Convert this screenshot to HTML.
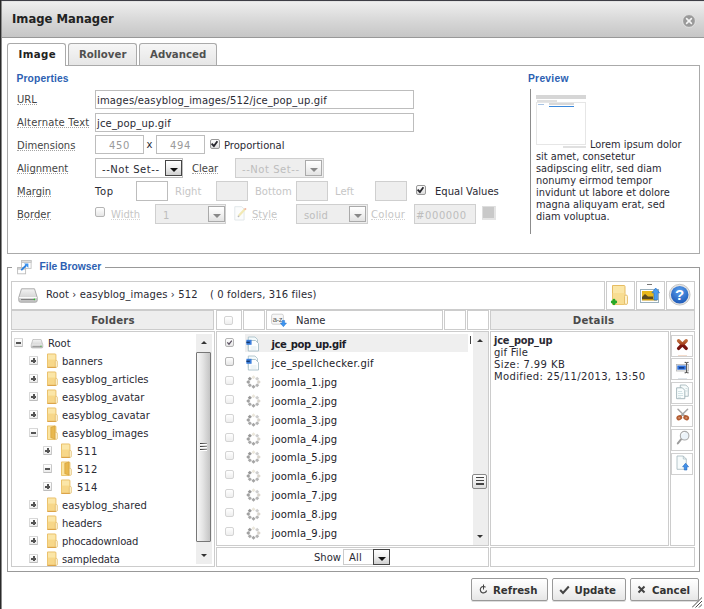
<!DOCTYPE html>
<html><head><meta charset="utf-8"><title>Image Manager</title>
<style>
*{box-sizing:border-box;margin:0;padding:0}
html,body{width:704px;height:609px;overflow:hidden;background:#fff}
body{font-family:"DejaVu Sans","Liberation Sans",sans-serif;font-size:10px;color:#333;position:relative}
.a{position:absolute}
.t{position:absolute;white-space:nowrap;line-height:12px;color:#2a2a33}
.lb{border-bottom:1px dotted #a4a4a4;height:11px;color:#444}
.t.dis{color:#c6c6c6}
.dis.lb{border-bottom-color:#d4d4d4}
.in{position:absolute;border:1px solid #bdbdbd;background:#fff;height:19px;line-height:19px;padding:0 1px;letter-spacing:.15px;overflow:hidden;white-space:nowrap;color:#2a2a33;font-size:10px}
.in.d{background:#eee;border-color:#cfcfcf;color:#bdbdbd}
.h{font-family:"Liberation Sans",sans-serif;font-weight:bold;font-size:10.3px;color:#2d5fb2}
.b{font-weight:bold}
.hdr{position:absolute;background:#eee;border:1px solid #ccc}
.pn{position:absolute;background:#fff;border:1px solid #ccc}
.cb{position:absolute;width:10px;height:10px;border:1px solid #999;border-radius:2px;background:linear-gradient(#fdfdfd,#dedede)}
.cb.s{width:9px;height:9px}
.cb.f{border-color:#d4d4d4;background:linear-gradient(#fff,#eee)}
.cb.m{border-color:#b4b4b4;background:linear-gradient(#fff,#e6e6e6)}
.btn{position:absolute;border:1px solid #999;border-radius:2px;background:linear-gradient(#fff,#f4f4f4 50%,#e6e6e6);height:23px;top:578px;box-shadow:0 1px 0 #ddd}
.ab{position:absolute;left:671px;width:22px;height:22px;border:1px solid #d0d0d0;background:#fff}
.sa{position:absolute;width:17px;height:16px;border:1px solid #444;background:linear-gradient(#fff,#f0f0f0 45%,#cfcfcf);}
.sa:after{content:"";position:absolute;left:3.5px;top:6.5px;border:4px solid transparent;border-top:4.5px solid #111;border-bottom:none}
.sa.d{border-color:#aaa;background:linear-gradient(#fff,#f4f4f4 45%,#e2e2e2)}
.sa.d:after{border-top-color:#888}
.pm{position:absolute;width:9px;height:9px;border:1px solid #d8d8d8;border-bottom-color:#bcbcbc;border-right-color:#c8c8c8;border-radius:1px;background:linear-gradient(#fff,#ececec)}
.pm:before{content:"";position:absolute;left:1px;top:2.500px;width:5px;height:2px;background:#555}
.pm.p:after{content:"";position:absolute;left:2.500px;top:1px;width:2px;height:5px;background:#555}
</style></head><body>
<div class="a" style="left:0;top:0;width:704px;height:1px;background:#3e3e46"></div>
<div class="a" style="left:0;top:0;width:1px;height:609px;background:#2a2a2a"></div>
<div class="a" style="left:1px;top:1px;width:1px;height:608px;background:#8a8a8a"></div>
<div class="a" style="left:2px;top:1px;width:702px;height:37px;background:linear-gradient(#dedede 0,#eeeeee 4%,#e3e3e3 28%,#d5d5d5 60%,#c6c6c6 100%);border-bottom:1px solid #989898"></div>
<div class="t b" style="left:12px;top:12px;font-size:11.6px;line-height:14px;color:#222">Image Manager</div>
<svg class="a" style="left:682px;top:14px" width="14" height="14" viewBox="0 0 14 14"><circle cx="7" cy="7" r="6.4" fill="#9a9a9a" stroke="#e8e8e8" stroke-width=".9"/><path d="M4.600 4.600L9.400 9.400M9.400 4.600L4.600 9.400" stroke="#f4f4f4" stroke-width="1.600" stroke-linecap="round"/></svg>
<div class="a" style="left:7px;top:65px;width:693px;height:189px;border:1px solid #aaa;background:#fff"></div>
<div class="a" style="left:68px;top:43px;width:69px;height:22px;border:1px solid #aaa;border-bottom:none;border-radius:3px 3px 0 0;background:linear-gradient(#f6f6f6,#e6e6e6)"></div>
<div class="a" style="left:139px;top:43px;width:78px;height:22px;border:1px solid #aaa;border-bottom:none;border-radius:3px 3px 0 0;background:linear-gradient(#f6f6f6,#e6e6e6)"></div>
<div class="a" style="left:7px;top:43px;width:59px;height:23px;border:1px solid #aaa;border-bottom:none;border-radius:3px 3px 0 0;background:#fff"></div>
<div class="t b" style="left:18.5px;top:49px;font-size:10.2px;letter-spacing:.4px;color:#222">Image</div>
<div class="t b" style="left:79px;top:49px;font-size:10.2px;color:#505050">Rollover</div>
<div class="t b" style="left:150px;top:49px;font-size:10.2px;color:#505050">Advanced</div>
<div class="t h" style="left:16.5px;top:73px;letter-spacing:.12px">Properties</div>
<div class="t lb " style="left:17px;top:94px">URL</div>
<div class="in" style="left:95px;top:90px;width:319px">images/easyblog_images/512/jce_pop_up.gif</div>
<div class="t lb " style="left:17px;top:117px;letter-spacing:0.2px">Alternate Text</div>
<div class="in" style="left:95px;top:113px;width:319px">jce_pop_up.gif</div>
<div class="t lb " style="left:17px;top:140px">Dimensions</div>
<div class="in" style="left:95px;top:135px;width:49px;text-align:center;letter-spacing:.7px;color:#9a9a9a">450</div>
<div class="t " style="left:146.5px;top:139px;font-size:10px">x</div>
<div class="in" style="left:156px;top:135px;width:49px;text-align:center;letter-spacing:.7px;color:#9a9a9a">494</div>
<div class="cb" style="left:210px;top:139px"></div>
<svg class="a" style="left:210.1px;top:138.7px" width="9" height="9" viewBox="0 0 9 9"><path d="M1.6 4.7L3.9 7L7.4 2.2" fill="none" stroke="#26262c" stroke-width="1.8"/></svg>
<div class="t " style="left:224px;top:140px;">Proportional</div>
<div class="t lb " style="left:17px;top:163px">Alignment</div>
<div class="in" style="left:95px;top:158px;width:88px;height:20px;padding-left:6px;line-height:21px;letter-spacing:.55px">--Not Set--</div>
<div class="sa" style="left:165px;top:160px"></div>
<div class="t lb " style="left:192px;top:163px">Clear</div>
<div class="in d" style="left:235px;top:158px;width:89px;height:20px;padding-left:6px;line-height:21px;letter-spacing:.55px">--Not Set--</div>
<div class="sa d" style="left:305px;top:160px"></div>
<div class="t lb " style="left:17px;top:186px">Margin</div>
<div class="t " style="left:95px;top:186px;letter-spacing:.6px">Top</div>
<div class="in" style="left:136px;top:181px;width:32px;height:20px"></div>
<div class="t dis" style="left:175px;top:186px;">Right</div>
<div class="in d" style="left:216px;top:181px;width:32px;height:20px"></div>
<div class="t dis" style="left:255px;top:186px;">Bottom</div>
<div class="in d" style="left:296px;top:181px;width:32px;height:20px"></div>
<div class="t dis" style="left:335px;top:186px;">Left</div>
<div class="in d" style="left:375px;top:181px;width:32px;height:20px"></div>
<div class="cb" style="left:416px;top:185px"></div>
<svg class="a" style="left:416.1px;top:184.7px" width="9" height="9" viewBox="0 0 9 9"><path d="M1.6 4.7L3.9 7L7.4 2.2" fill="none" stroke="#26262c" stroke-width="1.8"/></svg>
<div class="t " style="left:435px;top:186px;">Equal Values</div>
<div class="t lb " style="left:17px;top:209px">Border</div>
<div class="cb m" style="left:95px;top:207px"></div>
<div class="t lb dis" style="left:111px;top:209px">Width</div>
<div class="in d" style="left:155px;top:204px;width:71px;height:20px;padding-left:7px;line-height:21px">1</div>
<div class="sa d" style="left:208px;top:206px"></div>
<svg class="a" style="left:233px;top:205px" width="15" height="16" viewBox="0 0 15 16"><path d="M1.800 1.700h7l2.300 2.300v11h-9.300z" fill="#fbfcfc" stroke="#dfe5e8" stroke-width=".9"/><path d="M11.800 4.200L5.800 10.800" stroke="#f2e9b4" stroke-width="2.200"/><circle cx="12.300" cy="4" r="1.100" fill="#f1b8a4"/><circle cx="5.500" cy="11.300" r=".9" fill="#b8b8b8"/></svg>
<div class="t lb dis" style="left:252px;top:209px">Style</div>
<div class="in d" style="left:296px;top:204px;width:72px;height:20px;padding-left:7px;line-height:21px">solid</div>
<div class="sa d" style="left:349px;top:206px"></div>
<div class="t lb dis" style="left:371px;top:209px;letter-spacing:0.3px">Colour</div>
<div class="in d" style="left:414px;top:204px;width:62px;height:20px;padding-left:1px;line-height:21px;letter-spacing:.6px">#000000</div>
<div class="a" style="left:482px;top:206px;width:14px;height:14px;background:#c9c9c9;border:1px solid #dedede;border-right:2px solid #e4e4e4;border-bottom:2px solid #e4e4e4"></div>
<div class="t h" style="left:528px;top:73px;letter-spacing:.25px">Preview</div>
<div class="a" style="left:530px;top:89px;width:1px;height:145px;background:#8c8c8c"></div>
<div class="a" style="left:536px;top:95px;width:50px;height:54px;background:#fff">
<div class="a" style="left:0;top:0;width:50px;height:3.500px;background:#d6d6d6"></div>
<div class="a" style="left:1px;top:4.500px;width:20px;height:2px;background:#e0e0e0"></div>
<div class="a" style="left:0;top:6.500px;width:50px;height:43.500px;border:1px solid #e6e6e6"></div>
<div class="a" style="left:1.500px;top:8.500px;width:6px;height:1px;background:#a8c4e4"></div>
<div class="a" style="left:12.500px;top:7.800px;width:25px;height:2.400px;border:1px solid #d8d8d8;border-width:.6px"></div>
<div class="a" style="left:12.500px;top:11px;width:25px;height:1.400px;background:#3a88dc"></div>
<div class="a" style="left:26.500px;top:51px;width:23px;height:2.200px;background:#e0e0e0"></div>
</div>
<div class="a" style="left:536px;top:139px;width:160px;line-height:12px;font-size:9.8px;color:#2a2a33;text-indent:54px">Lorem ipsum dolor<br>sit amet, consetetur<br>sadipscing elitr, sed diam<br>nonumy eirmod tempor<br>invidunt ut labore et dolore<br>magna aliquyam erat, sed<br>diam voluptua.</div>
<div class="a" style="left:7px;top:267px;width:693px;height:305px;border:1px solid #999"></div>
<div class="a" style="left:12px;top:258px;width:93px;height:18px;background:#fff"></div>
<svg class="a" style="left:17px;top:260px" width="15" height="15" viewBox="0 0 15 15">
<rect x="4.500" y=".6" width="9.600" height="7.800" fill="#fff" stroke="#c2c2c2" stroke-width=".9"/><rect x="4.500" y=".6" width="9.600" height="1.800" fill="#e2e2e2" stroke="#c2c2c2" stroke-width=".9"/>
<rect x=".6" y="7.600" width="8" height="6.200" fill="#fff" stroke="#bcbcbc" stroke-width=".9"/><rect x=".6" y="7.600" width="8" height="1.500" fill="#e2e2e2" stroke="#bcbcbc" stroke-width=".9"/>
<path d="M4.800 9.600L8.600 5.800" stroke="#2a80e0" stroke-width="1.900" stroke-linecap="round"/><path d="M7 3.600h4.400v4.400z" fill="#3a92f0"/></svg>
<div class="t h" style="left:39.5px;top:261px">File Browser</div>
<div class="pn" style="left:11px;top:281px;width:594px;height:29px"></div>
<svg class="a" style="left:18px;top:288px" width="20" height="15" viewBox="0 0 20 15"><defs><linearGradient id="dg1" x1="0" y1="0" x2="0" y2="1"><stop offset="0" stop-color="#f4f4f4"/><stop offset="1" stop-color="#c4c4c4"/></linearGradient></defs>
<path d="M3.5 .8h13l2.7 8.5v3.2q0 1.7-1.7 1.7H2.500q-1.700 0-1.700-1.700V9.300z" fill="url(#dg1)" stroke="#a4a4a4" stroke-width=".9"/>
<path d="M1.2 9.600h17.600" stroke="#fff" stroke-width="1"/><path d="M3 11.600h14" stroke="#777" stroke-width="1"/><circle cx="16.400" cy="11.300" r=".9" fill="#2cc02c"/></svg>
<div class="t " style="left:46px;top:289px;letter-spacing:.1px">Root › easyblog_images › 512</div>
<div class="t " style="left:210px;top:289px;letter-spacing:.12px">( 0 folders, 316 files)</div>
<div class="pn" style="left:606px;top:281px;width:29px;height:29px"></div>
<div class="pn" style="left:636px;top:281px;width:29px;height:29px"></div>
<div class="pn" style="left:666px;top:281px;width:29px;height:29px"></div>
<svg class="a" style="left:609px;top:284px" width="20" height="22" viewBox="0 0 20 22">
<path d="M3.500 1.500h11.500q1 0 1 1v17q0 1-1 1h-11.500z" fill="#fbe6a6" stroke="#e6bc62"/>
<path d="M3.500 9h12.500v11.500h-12.500z" fill="#f7d98a" opacity=".7"/>
<rect x="15.500" y="11" width="3" height="9.500" rx="1.500" fill="#fff3cf" stroke="#e0b55a" stroke-width=".8"/>
<path d="M5 16.200v3.600M3.200 18h3.600" stroke="#27a827" stroke-width="2.800" stroke-linecap="round"/></svg>
<svg class="a" style="left:639px;top:283px" width="22" height="22" viewBox="0 0 22 22">
<rect x="8" y="1" width="5" height="1" fill="#777"/>
<rect x="1.500" y="6.500" width="18" height="13" fill="#fff" stroke="#9ab0bd"/>
<rect x="3" y="8" width="15" height="9" fill="#e8b71c"/>
<path d="M3 14l3-3 3 2.500h5v2.500h-11z" fill="#5a4a20"/>
<rect x="3" y="16" width="15" height="1.500" fill="#c8960c"/>
<path d="M16.700 5l3.800 4.800h-2.100v7.200h-3.400v-7.200h-2.100z" fill="#4a9cf0" stroke="#2a72c8" stroke-width=".7"/></svg>
<svg class="a" style="left:668px;top:283px" width="24" height="24" viewBox="0 0 24 24"><defs><radialGradient id="hg" cx=".5" cy=".3" r=".8"><stop offset="0" stop-color="#5aa0ee"/><stop offset="1" stop-color="#1650b0"/></radialGradient></defs>
<circle cx="11.700" cy="11.700" r="10.400" fill="#e4e4e4" stroke="#bbb" stroke-width=".8"/><circle cx="11.700" cy="11.700" r="8.800" fill="url(#hg)"/>
<text x="11.700" y="17" text-anchor="middle" font-family="Liberation Sans,sans-serif" font-weight="bold" font-size="15" fill="#fff">?</text></svg>
<div class="hdr" style="left:11px;top:310px;width:203px;height:20px"></div>
<div class="t b" style="left:11.5px;top:315px;width:203px;text-align:center;color:#4a4a4a;font-size:10.2px;letter-spacing:.2px">Folders</div>
<div class="pn" style="left:216px;top:310px;width:26px;height:20px"></div>
<div class="pn" style="left:243px;top:310px;width:22px;height:20px"></div>
<div class="pn" style="left:266px;top:310px;width:177px;height:20px"></div>
<div class="pn" style="left:444px;top:310px;width:22px;height:20px"></div>
<div class="pn" style="left:467px;top:310px;width:22px;height:20px"></div>
<svg class="a" style="left:271px;top:313px" width="16" height="15" viewBox="0 0 16 15"><rect x=".6" y="1.200" width="11.800" height="10" rx="1.500" fill="#f7f7f7" stroke="#cdcdcd" stroke-width=".9"/><text x="6.500" y="8.800" text-anchor="middle" font-family="Liberation Sans,sans-serif" font-size="7.500" fill="#5a5a5a" letter-spacing="-.3">a-z</text><path d="M11.200 7.500v2.600h-1.900l3.100 3.600 3.100-3.600h-1.900V7.500z" fill="#3d95f0" stroke="#2273cf" stroke-width=".5"/></svg>
<div class="t " style="left:296px;top:315px;">Name</div>
<div class="cb s f" style="left:224px;top:316px"></div>
<div class="hdr" style="left:490px;top:310px;width:205px;height:20px"></div>
<div class="t b" style="left:491px;top:315px;width:205px;text-align:center;color:#4a4a4a;font-size:10.2px;letter-spacing:.2px">Details</div>
<div class="pn" style="left:11px;top:331px;width:204px;height:236px"></div>
<div class="pn" style="left:216px;top:331px;width:273px;height:215px"></div>
<div class="pn" style="left:490px;top:331px;width:179px;height:215px"></div>
<div class="pn" style="left:670px;top:331px;width:25px;height:215px"></div>
<div class="pn" style="left:216px;top:547px;width:273px;height:20px"></div>
<div class="pn" style="left:490px;top:547px;width:205px;height:20px"></div>
<div class="a" style="left:12px;top:332px;width:184px;height:234px;overflow:hidden">
<div class="pm" style="left:2px;top:6px"></div>
<svg class="a" style="left:18px;top:7px" width="14" height="9.5" viewBox="0 0 20 15"><defs><linearGradient id="dg2" x1="0" y1="0" x2="0" y2="1"><stop offset="0" stop-color="#f4f4f4"/><stop offset="1" stop-color="#c4c4c4"/></linearGradient></defs>
<path d="M3.5 .8h13l2.7 8.5v3.2q0 1.7-1.7 1.7H2.500q-1.700 0-1.700-1.700V9.300z" fill="url(#dg2)" stroke="#a4a4a4" stroke-width=".9"/>
<path d="M1.2 9.600h17.600" stroke="#fff" stroke-width="1"/><path d="M3 11.600h14" stroke="#777" stroke-width="1"/><circle cx="16.400" cy="11.300" r=".9" fill="#2cc02c"/></svg>
<div class="t" style="left:36px;top:6px">Root</div>
<div class="pm p" style="left:17px;top:24px"></div>
<svg class="a" style="left:33.5px;top:21px" width="12.400" height="15" viewBox="0 0 13 16"><path d="M1.500 1h8q1 0 1 1v12.500q0 1-1 1h-8z" fill="#fbe6a8" stroke="#e6b85a" stroke-width=".9"/><path d="M1.500 7h9v8h-9z" fill="#f4cf78" opacity=".65"/><path d="M1.500 15.300h9" stroke="#d89c40" stroke-width="1"/><rect x="9.800" y="8" width="2.200" height="7.300" rx="1.100" fill="#fff4d4" stroke="#dcb25a" stroke-width=".7"/></svg>
<div class="t" style="left:50px;top:24px">banners</div>
<div class="pm p" style="left:17px;top:42px"></div>
<svg class="a" style="left:33.5px;top:39px" width="12.400" height="15" viewBox="0 0 13 16"><path d="M1.500 1h8q1 0 1 1v12.500q0 1-1 1h-8z" fill="#fbe6a8" stroke="#e6b85a" stroke-width=".9"/><path d="M1.500 7h9v8h-9z" fill="#f4cf78" opacity=".65"/><path d="M1.500 15.300h9" stroke="#d89c40" stroke-width="1"/><rect x="9.800" y="8" width="2.200" height="7.300" rx="1.100" fill="#fff4d4" stroke="#dcb25a" stroke-width=".7"/></svg>
<div class="t" style="left:50px;top:42px">easyblog_articles</div>
<div class="pm p" style="left:17px;top:60px"></div>
<svg class="a" style="left:33.5px;top:57px" width="12.400" height="15" viewBox="0 0 13 16"><path d="M1.500 1h8q1 0 1 1v12.500q0 1-1 1h-8z" fill="#fbe6a8" stroke="#e6b85a" stroke-width=".9"/><path d="M1.500 7h9v8h-9z" fill="#f4cf78" opacity=".65"/><path d="M1.500 15.300h9" stroke="#d89c40" stroke-width="1"/><rect x="9.800" y="8" width="2.200" height="7.300" rx="1.100" fill="#fff4d4" stroke="#dcb25a" stroke-width=".7"/></svg>
<div class="t" style="left:50px;top:60px">easyblog_avatar</div>
<div class="pm p" style="left:17px;top:78px"></div>
<svg class="a" style="left:33.5px;top:75px" width="12.400" height="15" viewBox="0 0 13 16"><path d="M1.500 1h8q1 0 1 1v12.500q0 1-1 1h-8z" fill="#fbe6a8" stroke="#e6b85a" stroke-width=".9"/><path d="M1.500 7h9v8h-9z" fill="#f4cf78" opacity=".65"/><path d="M1.500 15.300h9" stroke="#d89c40" stroke-width="1"/><rect x="9.800" y="8" width="2.200" height="7.300" rx="1.100" fill="#fff4d4" stroke="#dcb25a" stroke-width=".7"/></svg>
<div class="t" style="left:50px;top:78px">easyblog_cavatar</div>
<div class="pm" style="left:17px;top:96px"></div>
<svg class="a" style="left:33.5px;top:93px" width="12.400" height="15" viewBox="0 0 13 16"><path d="M1.500 1h8q1 0 1 1v12.500q0 1-1 1h-8z" fill="#fbe4a0" stroke="#e8bc5c" stroke-width=".9"/><path d="M5 2.500l4.500-1.500v14l-4.500 -1.500z" fill="#e8b84e" stroke="#cf9a36" stroke-width=".6"/><rect x="9.800" y="8" width="2.200" height="7.300" rx="1.100" fill="#fff4d4" stroke="#dcb25a" stroke-width=".7"/></svg>
<div class="t" style="left:50px;top:96px">easyblog_images</div>
<div class="pm p" style="left:31px;top:114px"></div>
<svg class="a" style="left:47.5px;top:111px" width="12.400" height="15" viewBox="0 0 13 16"><path d="M1.500 1h8q1 0 1 1v12.500q0 1-1 1h-8z" fill="#fbe6a8" stroke="#e6b85a" stroke-width=".9"/><path d="M1.500 7h9v8h-9z" fill="#f4cf78" opacity=".65"/><path d="M1.500 15.300h9" stroke="#d89c40" stroke-width="1"/><rect x="9.800" y="8" width="2.200" height="7.300" rx="1.100" fill="#fff4d4" stroke="#dcb25a" stroke-width=".7"/></svg>
<div class="t" style="left:65px;top:114px;letter-spacing:.7px">511</div>
<div class="pm" style="left:31px;top:132px"></div>
<svg class="a" style="left:47.5px;top:129px" width="12.400" height="15" viewBox="0 0 13 16"><path d="M1.500 1h8q1 0 1 1v12.500q0 1-1 1h-8z" fill="#fbe4a0" stroke="#e8bc5c" stroke-width=".9"/><path d="M5 2.500l4.500-1.500v14l-4.500 -1.500z" fill="#e8b84e" stroke="#cf9a36" stroke-width=".6"/><rect x="9.800" y="8" width="2.200" height="7.300" rx="1.100" fill="#fff4d4" stroke="#dcb25a" stroke-width=".7"/></svg>
<div class="t" style="left:65px;top:132px;letter-spacing:.7px">512</div>
<div class="pm p" style="left:31px;top:150px"></div>
<svg class="a" style="left:47.5px;top:147px" width="12.400" height="15" viewBox="0 0 13 16"><path d="M1.500 1h8q1 0 1 1v12.500q0 1-1 1h-8z" fill="#fbe6a8" stroke="#e6b85a" stroke-width=".9"/><path d="M1.500 7h9v8h-9z" fill="#f4cf78" opacity=".65"/><path d="M1.500 15.300h9" stroke="#d89c40" stroke-width="1"/><rect x="9.800" y="8" width="2.200" height="7.300" rx="1.100" fill="#fff4d4" stroke="#dcb25a" stroke-width=".7"/></svg>
<div class="t" style="left:65px;top:150px;letter-spacing:.7px">514</div>
<div class="pm p" style="left:17px;top:168px"></div>
<svg class="a" style="left:33.5px;top:165px" width="12.400" height="15" viewBox="0 0 13 16"><path d="M1.500 1h8q1 0 1 1v12.500q0 1-1 1h-8z" fill="#fbe6a8" stroke="#e6b85a" stroke-width=".9"/><path d="M1.500 7h9v8h-9z" fill="#f4cf78" opacity=".65"/><path d="M1.500 15.300h9" stroke="#d89c40" stroke-width="1"/><rect x="9.800" y="8" width="2.200" height="7.300" rx="1.100" fill="#fff4d4" stroke="#dcb25a" stroke-width=".7"/></svg>
<div class="t" style="left:50px;top:168px;letter-spacing:.05px">easyblog_shared</div>
<div class="pm p" style="left:17px;top:186px"></div>
<svg class="a" style="left:33.5px;top:183px" width="12.400" height="15" viewBox="0 0 13 16"><path d="M1.500 1h8q1 0 1 1v12.500q0 1-1 1h-8z" fill="#fbe6a8" stroke="#e6b85a" stroke-width=".9"/><path d="M1.500 7h9v8h-9z" fill="#f4cf78" opacity=".65"/><path d="M1.500 15.300h9" stroke="#d89c40" stroke-width="1"/><rect x="9.800" y="8" width="2.200" height="7.300" rx="1.100" fill="#fff4d4" stroke="#dcb25a" stroke-width=".7"/></svg>
<div class="t" style="left:50px;top:186px;letter-spacing:-.1px">headers</div>
<div class="pm p" style="left:17px;top:204px"></div>
<svg class="a" style="left:33.5px;top:201px" width="12.400" height="15" viewBox="0 0 13 16"><path d="M1.500 1h8q1 0 1 1v12.500q0 1-1 1h-8z" fill="#fbe6a8" stroke="#e6b85a" stroke-width=".9"/><path d="M1.500 7h9v8h-9z" fill="#f4cf78" opacity=".65"/><path d="M1.500 15.300h9" stroke="#d89c40" stroke-width="1"/><rect x="9.800" y="8" width="2.200" height="7.300" rx="1.100" fill="#fff4d4" stroke="#dcb25a" stroke-width=".7"/></svg>
<div class="t" style="left:50px;top:204px;letter-spacing:-.2px">phocadownload</div>
<div class="pm p" style="left:17px;top:222px"></div>
<svg class="a" style="left:33.5px;top:219px" width="12.400" height="15" viewBox="0 0 13 16"><path d="M1.500 1h8q1 0 1 1v12.500q0 1-1 1h-8z" fill="#fbe6a8" stroke="#e6b85a" stroke-width=".9"/><path d="M1.500 7h9v8h-9z" fill="#f4cf78" opacity=".65"/><path d="M1.500 15.300h9" stroke="#d89c40" stroke-width="1"/><rect x="9.800" y="8" width="2.200" height="7.300" rx="1.100" fill="#fff4d4" stroke="#dcb25a" stroke-width=".7"/></svg>
<div class="t" style="left:50px;top:222px;letter-spacing:-.12px">sampledata</div>
</div>
<div class="a" style="left:196px;top:334px;width:15.500px;height:230px;background:#eee"></div>
<div class="a" style="left:196px;top:352px;width:15px;height:190px;border:1px solid #777;border-radius:1px;background:linear-gradient(90deg,#f8f8f8,#e4e4e4 45%,#c4c4c4)"></div>
<div class="a" style="left:200.500px;top:340.500px;border:3.500px solid transparent;border-bottom:3.500px solid #333;border-top:none"></div>
<div class="a" style="left:200.500px;top:554px;border:3.500px solid transparent;border-top:3.500px solid #333;border-bottom:none"></div>
<div class="a" style="left:200px;top:443px;width:7px;height:1.300px;background:linear-gradient(90deg,#333,#999);box-shadow:0 1px 0 #fff"></div><div class="a" style="left:200px;top:446px;width:7px;height:1.300px;background:linear-gradient(90deg,#333,#999);box-shadow:0 1px 0 #fff"></div><div class="a" style="left:200px;top:449px;width:7px;height:1.300px;background:linear-gradient(90deg,#333,#999);box-shadow:0 1px 0 #fff"></div>
<div class="a" style="left:245px;top:334px;width:223px;height:17.500px;background:#efefef"></div>
<div class="cb s m" style="left:225px;top:338px"></div>
<svg class="a" style="left:225px;top:338px" width="9" height="9" viewBox="0 0 9 9"><path d="M2.300 4.300L4 6.200L6.800 2.600" fill="none" stroke="#5a5060" stroke-width="1.200"/></svg>
<svg class="a" style="left:245px;top:335.5px" width="16" height="16" viewBox="0 0 16 16"><path d="M3.300 1h6.700l2.500 2.500v9h-9.200z" fill="#f4fafb" stroke="#a4bcc6" stroke-width=".8"/><path d="M3.300 4.500h7.200l3 3v7.500h-10.200z" fill="#fcfefe" stroke="#9cb6c0" stroke-width=".8"/><rect x="1.400" y="3.800" width="5.200" height="5" fill="#3a7edc"/><rect x="1.400" y="5.600" width="3.400" height="1.500" fill="#173a70"/><path d="M5.500 11h6M5.500 13h6" stroke="#dbe8ec" stroke-width=".8"/></svg>
<div class="t b" style="left:271.500px;top:339px;color:#1c1c28;letter-spacing:-.45px">jce_pop_up.gif</div>
<div class="cb s m" style="left:225px;top:357px"></div>
<svg class="a" style="left:245px;top:354.5px" width="16" height="16" viewBox="0 0 16 16"><path d="M3.300 1h6.700l2.500 2.500v9h-9.200z" fill="#f4fafb" stroke="#a4bcc6" stroke-width=".8"/><path d="M3.300 4.500h7.200l3 3v7.500h-10.200z" fill="#fcfefe" stroke="#9cb6c0" stroke-width=".8"/><rect x="1.400" y="3.800" width="5.200" height="5" fill="#3a7edc"/><rect x="1.400" y="5.600" width="3.400" height="1.500" fill="#173a70"/><path d="M5.500 11h6M5.500 13h6" stroke="#dbe8ec" stroke-width=".8"/></svg>
<div class="t" style="left:271.500px;top:358px;color:#1c1c28;letter-spacing:.28px">jce_spellchecker.gif</div>
<div class="cb s f" style="left:225px;top:376px"></div>
<svg class="a" style="left:246px;top:374.5px" width="15" height="14" viewBox="0 0 15 14"><rect x="6.05" y="0.85" width="2.9" height="2.9" fill="#ebe7dc" transform="rotate(45 7.50 2.30)"/><rect x="9.73" y="2.23" width="2.9" height="2.9" fill="#cdcdcd" transform="rotate(45 11.18 3.68)"/><rect x="11.25" y="5.55" width="2.9" height="2.9" fill="#d8d4cc" transform="rotate(45 12.70 7.00)"/><rect x="9.73" y="8.87" width="2.9" height="2.9" fill="#b4b4b4" transform="rotate(45 11.18 10.32)"/><rect x="6.05" y="10.25" width="2.9" height="2.9" fill="#a4a4a4" transform="rotate(45 7.50 11.70)"/><rect x="2.37" y="8.87" width="2.9" height="2.9" fill="#a8a8a8" transform="rotate(45 3.82 10.32)"/><rect x="0.85" y="5.55" width="2.9" height="2.9" fill="#a0a0a0" transform="rotate(45 2.30 7.00)"/><rect x="2.37" y="2.23" width="2.9" height="2.9" fill="#969696" transform="rotate(45 3.82 3.68)"/></svg>
<div class="t" style="left:271.500px;top:377px;color:#1c1c28;letter-spacing:.17px">joomla_1.jpg</div>
<div class="cb s f" style="left:225px;top:395px"></div>
<svg class="a" style="left:246px;top:393.5px" width="15" height="14" viewBox="0 0 15 14"><rect x="6.05" y="0.85" width="2.9" height="2.9" fill="#ebe7dc" transform="rotate(45 7.50 2.30)"/><rect x="9.73" y="2.23" width="2.9" height="2.9" fill="#cdcdcd" transform="rotate(45 11.18 3.68)"/><rect x="11.25" y="5.55" width="2.9" height="2.9" fill="#d8d4cc" transform="rotate(45 12.70 7.00)"/><rect x="9.73" y="8.87" width="2.9" height="2.9" fill="#b4b4b4" transform="rotate(45 11.18 10.32)"/><rect x="6.05" y="10.25" width="2.9" height="2.9" fill="#a4a4a4" transform="rotate(45 7.50 11.70)"/><rect x="2.37" y="8.87" width="2.9" height="2.9" fill="#a8a8a8" transform="rotate(45 3.82 10.32)"/><rect x="0.85" y="5.55" width="2.9" height="2.9" fill="#a0a0a0" transform="rotate(45 2.30 7.00)"/><rect x="2.37" y="2.23" width="2.9" height="2.9" fill="#969696" transform="rotate(45 3.82 3.68)"/></svg>
<div class="t" style="left:271.500px;top:396px;color:#1c1c28;letter-spacing:.17px">joomla_2.jpg</div>
<div class="cb s f" style="left:225px;top:414px"></div>
<svg class="a" style="left:246px;top:412.5px" width="15" height="14" viewBox="0 0 15 14"><rect x="6.05" y="0.85" width="2.9" height="2.9" fill="#ebe7dc" transform="rotate(45 7.50 2.30)"/><rect x="9.73" y="2.23" width="2.9" height="2.9" fill="#cdcdcd" transform="rotate(45 11.18 3.68)"/><rect x="11.25" y="5.55" width="2.9" height="2.9" fill="#d8d4cc" transform="rotate(45 12.70 7.00)"/><rect x="9.73" y="8.87" width="2.9" height="2.9" fill="#b4b4b4" transform="rotate(45 11.18 10.32)"/><rect x="6.05" y="10.25" width="2.9" height="2.9" fill="#a4a4a4" transform="rotate(45 7.50 11.70)"/><rect x="2.37" y="8.87" width="2.9" height="2.9" fill="#a8a8a8" transform="rotate(45 3.82 10.32)"/><rect x="0.85" y="5.55" width="2.9" height="2.9" fill="#a0a0a0" transform="rotate(45 2.30 7.00)"/><rect x="2.37" y="2.23" width="2.9" height="2.9" fill="#969696" transform="rotate(45 3.82 3.68)"/></svg>
<div class="t" style="left:271.500px;top:415px;color:#1c1c28;letter-spacing:.17px">joomla_3.jpg</div>
<div class="cb s f" style="left:225px;top:433px"></div>
<svg class="a" style="left:246px;top:431.5px" width="15" height="14" viewBox="0 0 15 14"><rect x="6.05" y="0.85" width="2.9" height="2.9" fill="#ebe7dc" transform="rotate(45 7.50 2.30)"/><rect x="9.73" y="2.23" width="2.9" height="2.9" fill="#cdcdcd" transform="rotate(45 11.18 3.68)"/><rect x="11.25" y="5.55" width="2.9" height="2.9" fill="#d8d4cc" transform="rotate(45 12.70 7.00)"/><rect x="9.73" y="8.87" width="2.9" height="2.9" fill="#b4b4b4" transform="rotate(45 11.18 10.32)"/><rect x="6.05" y="10.25" width="2.9" height="2.9" fill="#a4a4a4" transform="rotate(45 7.50 11.70)"/><rect x="2.37" y="8.87" width="2.9" height="2.9" fill="#a8a8a8" transform="rotate(45 3.82 10.32)"/><rect x="0.85" y="5.55" width="2.9" height="2.9" fill="#a0a0a0" transform="rotate(45 2.30 7.00)"/><rect x="2.37" y="2.23" width="2.9" height="2.9" fill="#969696" transform="rotate(45 3.82 3.68)"/></svg>
<div class="t" style="left:271.500px;top:434px;color:#1c1c28;letter-spacing:.17px">joomla_4.jpg</div>
<div class="cb s f" style="left:225px;top:451px"></div>
<svg class="a" style="left:246px;top:449.5px" width="15" height="14" viewBox="0 0 15 14"><rect x="6.05" y="0.85" width="2.9" height="2.9" fill="#ebe7dc" transform="rotate(45 7.50 2.30)"/><rect x="9.73" y="2.23" width="2.9" height="2.9" fill="#cdcdcd" transform="rotate(45 11.18 3.68)"/><rect x="11.25" y="5.55" width="2.9" height="2.9" fill="#d8d4cc" transform="rotate(45 12.70 7.00)"/><rect x="9.73" y="8.87" width="2.9" height="2.9" fill="#b4b4b4" transform="rotate(45 11.18 10.32)"/><rect x="6.05" y="10.25" width="2.9" height="2.9" fill="#a4a4a4" transform="rotate(45 7.50 11.70)"/><rect x="2.37" y="8.87" width="2.9" height="2.9" fill="#a8a8a8" transform="rotate(45 3.82 10.32)"/><rect x="0.85" y="5.55" width="2.9" height="2.9" fill="#a0a0a0" transform="rotate(45 2.30 7.00)"/><rect x="2.37" y="2.23" width="2.9" height="2.9" fill="#969696" transform="rotate(45 3.82 3.68)"/></svg>
<div class="t" style="left:271.500px;top:452px;color:#1c1c28;letter-spacing:.17px">joomla_5.jpg</div>
<div class="cb s f" style="left:225px;top:470px"></div>
<svg class="a" style="left:246px;top:468.5px" width="15" height="14" viewBox="0 0 15 14"><rect x="6.05" y="0.85" width="2.9" height="2.9" fill="#ebe7dc" transform="rotate(45 7.50 2.30)"/><rect x="9.73" y="2.23" width="2.9" height="2.9" fill="#cdcdcd" transform="rotate(45 11.18 3.68)"/><rect x="11.25" y="5.55" width="2.9" height="2.9" fill="#d8d4cc" transform="rotate(45 12.70 7.00)"/><rect x="9.73" y="8.87" width="2.9" height="2.9" fill="#b4b4b4" transform="rotate(45 11.18 10.32)"/><rect x="6.05" y="10.25" width="2.9" height="2.9" fill="#a4a4a4" transform="rotate(45 7.50 11.70)"/><rect x="2.37" y="8.87" width="2.9" height="2.9" fill="#a8a8a8" transform="rotate(45 3.82 10.32)"/><rect x="0.85" y="5.55" width="2.9" height="2.9" fill="#a0a0a0" transform="rotate(45 2.30 7.00)"/><rect x="2.37" y="2.23" width="2.9" height="2.9" fill="#969696" transform="rotate(45 3.82 3.68)"/></svg>
<div class="t" style="left:271.500px;top:471px;color:#1c1c28;letter-spacing:.17px">joomla_6.jpg</div>
<div class="cb s f" style="left:225px;top:489px"></div>
<svg class="a" style="left:246px;top:487.5px" width="15" height="14" viewBox="0 0 15 14"><rect x="6.05" y="0.85" width="2.9" height="2.9" fill="#ebe7dc" transform="rotate(45 7.50 2.30)"/><rect x="9.73" y="2.23" width="2.9" height="2.9" fill="#cdcdcd" transform="rotate(45 11.18 3.68)"/><rect x="11.25" y="5.55" width="2.9" height="2.9" fill="#d8d4cc" transform="rotate(45 12.70 7.00)"/><rect x="9.73" y="8.87" width="2.9" height="2.9" fill="#b4b4b4" transform="rotate(45 11.18 10.32)"/><rect x="6.05" y="10.25" width="2.9" height="2.9" fill="#a4a4a4" transform="rotate(45 7.50 11.70)"/><rect x="2.37" y="8.87" width="2.9" height="2.9" fill="#a8a8a8" transform="rotate(45 3.82 10.32)"/><rect x="0.85" y="5.55" width="2.9" height="2.9" fill="#a0a0a0" transform="rotate(45 2.30 7.00)"/><rect x="2.37" y="2.23" width="2.9" height="2.9" fill="#969696" transform="rotate(45 3.82 3.68)"/></svg>
<div class="t" style="left:271.500px;top:490px;color:#1c1c28;letter-spacing:.17px">joomla_7.jpg</div>
<div class="cb s f" style="left:225px;top:508px"></div>
<svg class="a" style="left:246px;top:506.5px" width="15" height="14" viewBox="0 0 15 14"><rect x="6.05" y="0.85" width="2.9" height="2.9" fill="#ebe7dc" transform="rotate(45 7.50 2.30)"/><rect x="9.73" y="2.23" width="2.9" height="2.9" fill="#cdcdcd" transform="rotate(45 11.18 3.68)"/><rect x="11.25" y="5.55" width="2.9" height="2.9" fill="#d8d4cc" transform="rotate(45 12.70 7.00)"/><rect x="9.73" y="8.87" width="2.9" height="2.9" fill="#b4b4b4" transform="rotate(45 11.18 10.32)"/><rect x="6.05" y="10.25" width="2.9" height="2.9" fill="#a4a4a4" transform="rotate(45 7.50 11.70)"/><rect x="2.37" y="8.87" width="2.9" height="2.9" fill="#a8a8a8" transform="rotate(45 3.82 10.32)"/><rect x="0.85" y="5.55" width="2.9" height="2.9" fill="#a0a0a0" transform="rotate(45 2.30 7.00)"/><rect x="2.37" y="2.23" width="2.9" height="2.9" fill="#969696" transform="rotate(45 3.82 3.68)"/></svg>
<div class="t" style="left:271.500px;top:509px;color:#1c1c28;letter-spacing:.17px">joomla_8.jpg</div>
<div class="cb s f" style="left:225px;top:527px"></div>
<svg class="a" style="left:246px;top:525.5px" width="15" height="14" viewBox="0 0 15 14"><rect x="6.05" y="0.85" width="2.9" height="2.9" fill="#ebe7dc" transform="rotate(45 7.50 2.30)"/><rect x="9.73" y="2.23" width="2.9" height="2.9" fill="#cdcdcd" transform="rotate(45 11.18 3.68)"/><rect x="11.25" y="5.55" width="2.9" height="2.9" fill="#d8d4cc" transform="rotate(45 12.70 7.00)"/><rect x="9.73" y="8.87" width="2.9" height="2.9" fill="#b4b4b4" transform="rotate(45 11.18 10.32)"/><rect x="6.05" y="10.25" width="2.9" height="2.9" fill="#a4a4a4" transform="rotate(45 7.50 11.70)"/><rect x="2.37" y="8.87" width="2.9" height="2.9" fill="#a8a8a8" transform="rotate(45 3.82 10.32)"/><rect x="0.85" y="5.55" width="2.9" height="2.9" fill="#a0a0a0" transform="rotate(45 2.30 7.00)"/><rect x="2.37" y="2.23" width="2.9" height="2.9" fill="#969696" transform="rotate(45 3.82 3.68)"/></svg>
<div class="t" style="left:271.500px;top:528px;color:#1c1c28;letter-spacing:.17px">joomla_9.jpg</div>
<div class="a" style="left:473px;top:332px;width:15px;height:213px;background:#eee"></div>
<div class="a" style="left:470px;top:336px;width:1px;height:8px;background:#444"></div>
<div class="a" style="left:477px;top:338.500px;border:3.500px solid transparent;border-bottom:3.500px solid #333;border-top:none"></div>
<div class="a" style="left:476.500px;top:535px;border:3.500px solid transparent;border-top:3.500px solid #333;border-bottom:none"></div>
<div class="a" style="left:472px;top:474px;width:15px;height:15px;border:1px solid #888;border-radius:2px;background:linear-gradient(#fff,#ddd)"></div>
<div class="a" style="left:476px;top:477px;width:7.500px;height:1.300px;background:#444"></div><div class="a" style="left:476px;top:480.200px;width:7.500px;height:1.300px;background:#444"></div><div class="a" style="left:476px;top:483.400px;width:7.500px;height:1.300px;background:#444"></div>
<div class="t " style="left:314px;top:552px;">Show</div>
<div class="in" style="left:343px;top:549px;width:47px;height:16px;line-height:16px;padding-left:5px;border-color:#ccc">All</div>
<div class="sa" style="left:373px;top:549px;height:16px"><div class="a" style="left:0;top:0"></div></div>
<div class="t b" style="left:494px;top:335px;font-size:9.800px;letter-spacing:-.2px">jce_pop_up</div>
<div class="t " style="left:494px;top:347px;letter-spacing:.2px">gif File</div>
<div class="t " style="left:494px;top:359px;letter-spacing:.4px">Size: 7.99 KB</div>
<div class="t " style="left:494px;top:371px;letter-spacing:.35px">Modified: 25/11/2013, 13:50</div>
<div class="ab" style="top:335px"></div>
<div class="ab" style="top:358px"></div>
<div class="ab" style="top:382px"></div>
<div class="ab" style="top:405px"></div>
<div class="ab" style="top:429px"></div>
<div class="ab" style="top:453px"></div>
<svg class="a" style="left:670px;top:334px" width="25" height="142" viewBox="670 334 25 142">
<defs><linearGradient id="xg" x1="0" y1="0" x2="0" y2="1"><stop offset="0" stop-color="#bc6a3a"/><stop offset=".45" stop-color="#a8401e"/><stop offset=".6" stop-color="#7c1610"/><stop offset="1" stop-color="#74120e"/></linearGradient></defs>
<path d="M678.600 340.800L686.200 348.400M686.200 340.800L678.600 348.400" stroke="url(#xg)" stroke-width="3.400" stroke-linecap="round" fill="none"/>
<rect x="677.300" y="339.500" width="10.200" height="10.200" fill="none" stroke="none"/>
<rect x="678" y="355" width="9" height="1" fill="#f4dccc"/>
<rect x="676.400" y="364.400" width="12" height="6.600" fill="#f2f2f2" stroke="#b4b4b4" stroke-width=".8"/>
<rect x="677.300" y="365.500" width="8.500" height="4.200" fill="#2c6fdc"/><rect x="679" y="367.200" width="5" height="1.300" fill="#0e3276"/>
<path d="M686.600 362.500v10.200M684.600 362.400h1.400l.6 .8 .6-.8h1.400M684.600 372.800h1.400l.6-.8 .6 .8h1.400" stroke="#3a3a3a" stroke-width=".9" fill="none"/>
<rect x="678" y="378" width="9" height="1" fill="#dfe6ec"/>
<path d="M680.300 385h5.500l2.500 2.500v8.800h-8z" fill="#f6fbfb" stroke="#9fb2b8" stroke-width=".8"/>
<path d="M676.600 387.800h5.700l2.500 2.500v8.400h-8.200z" fill="#f9fdfd" stroke="#94a8ae" stroke-width=".8"/>
<path d="M678 391.500h4M678 393.500h5M678 395.500h5M678 397.300h3M685.500 388.500h1.500M686 391h1.300" stroke="#c2d6da" stroke-width=".7"/>
<path d="M678 409.200L685.600 416.800M687.600 409.200L680 416.800" stroke="#a6a6a6" stroke-width="1.500" stroke-linecap="round"/>
<ellipse cx="679.300" cy="417.700" rx="3" ry="2.500" fill="#b25c32" transform="rotate(-30 679.300 417.700)"/><ellipse cx="686.200" cy="417.700" rx="3" ry="2.500" fill="#b25c32" transform="rotate(30 686.200 417.700)"/>
<ellipse cx="679.200" cy="417.900" rx="1.100" ry=".8" fill="#d89470"/><ellipse cx="686.300" cy="417.900" rx="1.100" ry=".8" fill="#d89470"/>
<path d="M681.200 439.200L677.800 443.400" stroke="#9c9c9c" stroke-width="2" stroke-linecap="round"/>
<circle cx="684.600" cy="435.700" r="4.300" fill="#ecf3f9" stroke="#ababab" stroke-width="1.100"/><path d="M682 434.500a3 3 0 0 1 3-2" stroke="#fff" stroke-width="1" fill="none"/>
<path d="M677 456h6.300l3 3v10.300h-9.300z" fill="#f6fbfb" stroke="#a4b8be" stroke-width=".8"/><path d="M683.300 456v3h3" fill="none" stroke="#a4b8be" stroke-width=".7"/>
<path d="M685.600 463.200l3 3.600h-1.700v3.200h-2.600v-3.200h-1.700z" fill="#3f90ea" stroke="#1f66bc" stroke-width=".6"/>
</svg>
<div class="btn" style="left:471px;width:77px"></div>
<div class="btn" style="left:552px;width:74px"></div>
<div class="btn" style="left:630px;width:69px"></div>
<svg class="a" style="left:479px;top:584px" width="9" height="12" viewBox="0 0 9 12"><path d="M6.500 3.200A3.200 3.200 0 1 0 7.600 6.500" fill="none" stroke="#444" stroke-width="1.100"/><path d="M4.500 .5v5" stroke="#444" stroke-width="1"/><path d="M3 9.500l1.500 1.500 1.500-1.500" fill="none" stroke="#444" stroke-width=".01"/></svg>
<div class="t b" style="left:493px;top:585px;font-size:10.200px;color:#333">Refresh</div>
<svg class="a" style="left:559px;top:585px" width="11" height="10" viewBox="0 0 11 10"><path d="M1.200 5L4 8L9.800 1.500" fill="none" stroke="#444" stroke-width="2"/></svg>
<div class="t b" style="left:574.5px;top:585px;font-size:10.200px;color:#333">Update</div>
<svg class="a" style="left:637px;top:585px" width="9" height="9" viewBox="0 0 9 9"><path d="M1.500 1.500L7.500 7.500M7.500 1.500L1.500 7.500" stroke="#444" stroke-width="2"/></svg>
<div class="t b" style="left:652px;top:585px;font-size:10.200px;color:#333">Cancel</div>
<svg class="a" style="left:691.500px;top:597px" width="10.500" height="10.500" viewBox="0 0 12 12"><path d="M0 12L12 0M4 12L12 4M8 12L12 8" stroke="#444" stroke-width="1.100"/></svg>
</body></html>
